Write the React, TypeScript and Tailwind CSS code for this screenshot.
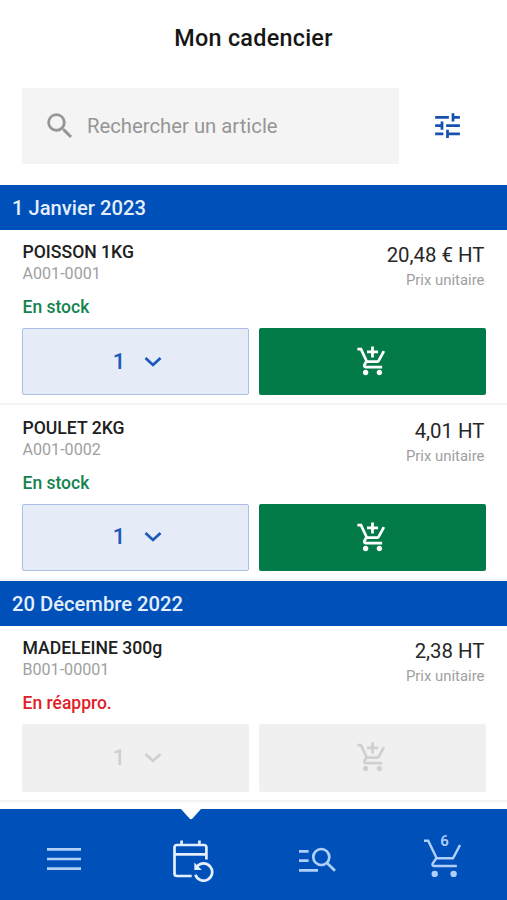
type Product = {
  name: string
  code: string
  price: string
  available: boolean
}

type Order = {
  date: string
  products: Product[]
}

const orders: Order[] = [
  {
    date: '1 Janvier 2023',
    products: [
      { name: 'POISSON 1KG', code: 'A001-0001', price: '20,48 € HT', available: true },
      { name: 'POULET 2KG', code: 'A001-0002', price: '4,01 HT', available: true },
    ],
  },
  {
    date: '20 Décembre 2022',
    products: [
      { name: 'MADELEINE 300g', code: 'B001-00001', price: '2,38 HT', available: false },
    ],
  },
]

function SearchIcon() {
  return (
    <svg viewBox="0 0 24 24" className="size-[34px] shrink-0" fill="currentColor">
      <path d="M15.5 14h-.79l-.28-.27A6.471 6.471 0 0 0 16 9.5 6.5 6.5 0 1 0 9.5 16c1.61 0 3.09-.59 4.23-1.57l.27.28v.79l5 4.99L20.49 19l-4.99-5zm-6 0C7.01 14 5 11.99 5 9.5S7.01 5 9.5 5 14 7.01 14 9.5 11.99 14 9.5 14z" />
    </svg>
  )
}

function TuneIcon() {
  return (
    <svg viewBox="0 0 24 24" className="size-[33px]" fill="currentColor">
      <path d="M3 17v2h6v-2H3zM3 5v2h10V5H3zm10 16v-2h8v-2h-8v-2h-2v6h2zM7 9v2H3v2h4v2h2V9H7zm14 4v-2H11v2h10zm-6-4h2V7h4V5h-4V3h-2v6z" />
    </svg>
  )
}

function AddCartIcon() {
  return (
    <svg viewBox="0 0 24 24" className="size-[33px]" fill="currentColor">
      <path d="M11 9h2V6h3V4h-3V1h-2v3H8v2h3v3zm-4 9c-1.1 0-1.99.9-1.99 2S5.9 22 7 22s2-.9 2-2-.9-2-2-2zm10 0c-1.1 0-1.99.9-1.99 2s.89 2 1.99 2 2-.9 2-2-.9-2-2-2zm-8.9-5h7.45c.75 0 1.41-.41 1.75-1.03l3.86-7.01L19.42 4l-3.87 7H8.53L4.27 2H1v2h2l3.6 7.59-1.35 2.44C4.52 15.37 5.48 17 7 17h12v-2H7l1.1-2z" />
    </svg>
  )
}

function ChevronIcon() {
  return (
    <svg viewBox="0 0 18 12" className="h-3 w-[18px]" fill="none" stroke="currentColor" strokeWidth="2.8">
      <path d="M1.500 1.900 9 8.900l7.500-7" />
    </svg>
  )
}

function ProductRow({ product }: { product: Product }) {
  const { available } = product

  return (
    <article className="h-[175.7px] border-b-2 border-[#f3f4f5] px-[22px]">
      <div className="flex h-[98.2px] justify-between">
        <div className="pt-[10.2px] pl-[0.5px]">
          <h3 className="text-[17.6px] leading-6 font-medium text-[#202020]">{product.name}</h3>
          <p className="text-[16.1px] leading-5 text-[#a0a0a0]">{product.code}</p>
          <p
            className={
              available
                ? 'mt-[11px] text-[17.5px] leading-6 font-medium text-[#148350]'
                : 'mt-[11px] text-[17.5px] leading-6 font-medium text-[#df2029]'
            }
          >
            {available ? 'En stock' : 'En réappro.'}
          </p>
        </div>
        <div className="pt-[11.2px] pr-[0.5px] text-right">
          <p className="text-[20.4px] leading-7 text-[#272727]">{product.price}</p>
          <p className="text-[14.9px] leading-[22px] text-[#a0a0a0]">Prix unitaire</p>
        </div>
      </div>
      <div className="-mr-px grid h-[67.5px] grid-cols-2 gap-[10px]">
        <button
          className={
            available
              ? 'flex items-center justify-center gap-[19px] rounded-[2px] border border-[#aabfe3] bg-[#e5ecf8] pl-[4px] text-[#1c59b8]'
              : 'flex items-center justify-center gap-[19px] rounded-[2px] bg-[#f0f0f0] pl-[4px] text-[#d0d0d0]'
          }
        >
          <span className="text-[22px] leading-7 font-medium">1</span>
          <ChevronIcon />
        </button>
        <button
          className={
            available
              ? 'flex items-center justify-center rounded-[2px] bg-[#037b49] text-white'
              : 'flex items-center justify-center rounded-[2px] bg-[#f0f0f0] text-[#d0d0d0]'
          }
        >
          <AddCartIcon />
        </button>
      </div>
    </article>
  )
}

function BottomNav() {
  return (
    <nav className="relative grid h-[91px] shrink-0 grid-cols-4 bg-[#0050b9] text-[#b0d0fa]">
      <svg viewBox="0 0 20 11" className="absolute top-0 left-[181px] h-[11px] w-5" fill="#fff">
        <path d="M0 0h20l-8.300 9.300q-1.700 1.700-3.400 0z" />
      </svg>
      <button className="flex items-center justify-center pt-[9px] pl-[2px]">
        <svg viewBox="0 0 36 26" className="h-[26px] w-9" stroke="currentColor" strokeWidth="2.7">
          <path d="M1 3.300h34M1 13h34M1 22.700h34" />
        </svg>
      </button>
      <button className="flex items-center justify-center pt-[11px] pl-[6px] text-[#e4effd]">
        <svg viewBox="0 0 42 44" className="h-11 w-[42px]" fill="none" stroke="currentColor" strokeWidth="2.7">
          <path d="M34.400 21.500V9.500q0-2.500-2.500-2.500H5q-2.500 0-2.500 2.500v26Q2.500 38 5 38h14.700M2.500 16.300h32M9.600 2.500V7M27.400 2.500V7" />
          <path d="M25 28.500A8.600 8.600 0 1 1 23.400 36.800" />
          <path d="M22.300 24.500v7.500h7.500z" fill="currentColor" stroke="none" />
        </svg>
      </button>
      <button className="flex items-center justify-center pt-[11px]">
        <svg viewBox="0 0 38 28" className="h-7 w-[38px]" fill="none" stroke="currentColor" strokeWidth="2.7">
          <path d="M1 5.300h9.600M1 14.700h9.600M1 24.300h19M29 17l8 7.700" />
          <circle cx="23.300" cy="11" r="8" />
        </svg>
      </button>
      <button className="flex items-center justify-center pt-[1px] pr-[3px]">
        <span className="relative block">
          <svg viewBox="0 0 38 44" className="h-11 w-[38px]" fill="none" stroke="currentColor" strokeWidth="2.400">
            <path d="M1 7.700h4.200l8.500 17.600H30L37 12M13.300 25.300l-3.600 5.200q-.9 2.500 1.600 2.500h22.500" />
            <circle cx="11.700" cy="41" r="3.200" fill="currentColor" stroke="none" />
            <circle cx="30.600" cy="41" r="3.200" fill="currentColor" stroke="none" />
          </svg>
          <span className="absolute top-0 left-[17px] text-[15px] leading-4 font-semibold">6</span>
        </span>
      </button>
    </nav>
  )
}

export default function App() {
  return (
    <div className="flex h-[900px] w-[507px] flex-col overflow-hidden bg-white font-[Roboto,sans-serif]">
      <header className="h-[185px] shrink-0">
        <h1 className="pt-[22px] text-center text-[23.4px] leading-8 font-medium tracking-[0.25px] text-[#161616]">
          Mon cadencier
        </h1>
        <div className="mt-[34px] flex items-center px-[22px]">
          <div className="flex h-[76px] w-[377px] items-center gap-[10px] bg-[#f4f4f4] pl-[21px] text-[#969696]">
            <SearchIcon />
            <span className="pb-[1px] text-[20.3px] leading-7">Rechercher un article</span>
          </div>
          <button className="ml-[32px] pb-[2px] text-[#1751ae]">
            <TuneIcon />
          </button>
        </div>
      </header>
      <main className="flex-1">
        {orders.map((order) => (
          <section key={order.date}>
            <h2 className="flex h-[44.8px] items-center bg-[#0050b9] pt-[1px] pl-3 text-[20.2px] leading-7 font-medium text-[#e4effd]">
              {order.date}
            </h2>
            {order.products.map((product) => (
              <ProductRow key={product.code} product={product} />
            ))}
          </section>
        ))}
      </main>
      <BottomNav />
    </div>
  )
}
